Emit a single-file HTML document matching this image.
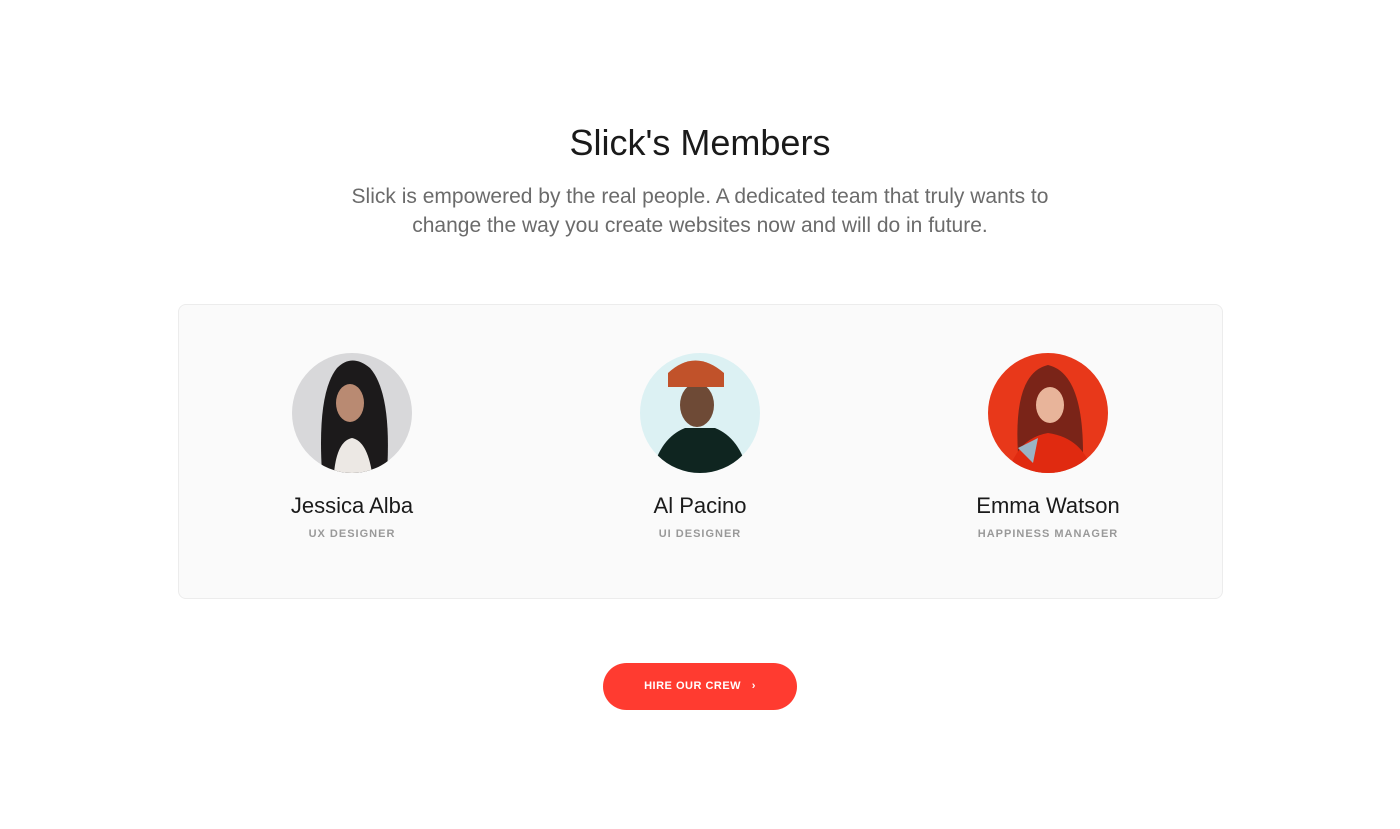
<!DOCTYPE html>
<html><head><style>
body{margin:0;width:1400px;height:829px;background:#fff;font-family:"Liberation Sans",sans-serif;position:relative;overflow:hidden}
h1{position:absolute;top:119px;left:0;width:1400px;text-align:center;margin:0;font-weight:400;font-size:36px;color:#1a1a1a;line-height:48px}
p.lead{position:absolute;top:182px;left:200px;width:1000px;text-align:center;margin:0;font-size:21px;line-height:29px;color:#6b6b6b}
.card{position:absolute;left:178px;top:304px;width:1043px;height:293px;background:#fafafa;border:1px solid #ececec;border-radius:8px}
.m{position:absolute;top:353px;width:300px;text-align:center}
.m svg{display:block;margin:0 auto}
.n{font-size:22px;color:#1a1a1a;margin-top:17px;line-height:32px}
.r{font-size:11px;font-weight:700;letter-spacing:1px;color:#999;margin-top:6px}
.btn{position:absolute;left:603px;top:663px;width:194px;height:47px;border-radius:24px;background:#ff3b30;color:#fff;font-size:11px;font-weight:700;letter-spacing:.5px;text-align:center;line-height:47px}
</style></head><body>
<h1>Slick's Members</h1>
<p class="lead">Slick is empowered by the real people. A dedicated team that truly wants to<br>change the way you create websites now and will do in future.</p>
<div class="card"></div>
<div class="m" style="left:202px"><svg width="120" height="120"><defs><clipPath id="a"><circle cx="60" cy="60" r="60"/></clipPath></defs><g clip-path="url(#a)"><rect width="120" height="120" fill="#d8d8da"/><path d="M30 120 Q25 40 45 15 Q60 0 78 15 Q100 40 95 120Z" fill="#1c1a1b"/><ellipse cx="58" cy="50" rx="14" ry="19" fill="#b98a72"/><path d="M42 120 Q45 88 60 85 Q75 88 80 120Z" fill="#ece8e4"/></g></svg><div class="n">Jessica Alba</div><div class="r">UX DESIGNER</div></div>
<div class="m" style="left:550px"><svg width="120" height="120"><defs><clipPath id="b"><circle cx="60" cy="60" r="60"/></clipPath></defs><g clip-path="url(#b)"><rect width="120" height="120" fill="#dcf1f3"/><ellipse cx="57" cy="52" rx="17" ry="22" fill="#6e4a36"/><path d="M28 20 Q55 -5 84 20 L84 34 L28 34Z" fill="#c1522a"/><path d="M12 120 Q20 85 45 75 L75 75 Q100 85 108 120Z" fill="#0f2520"/></g></svg><div class="n">Al Pacino</div><div class="r">UI DESIGNER</div></div>
<div class="m" style="left:898px"><svg width="120" height="120"><defs><clipPath id="c"><circle cx="60" cy="60" r="60"/></clipPath></defs><g clip-path="url(#c)"><rect width="120" height="120" fill="#e8381a"/><path d="M30 100 Q25 20 60 12 Q95 20 95 100Z" fill="#7a2418"/><ellipse cx="62" cy="52" rx="14" ry="18" fill="#e8b49a"/><path d="M20 120 Q30 85 60 80 Q95 85 105 120Z" fill="#e02a10"/><path d="M30 95 L50 85 L45 110 Z" fill="#9ab4c4"/></g></svg><div class="n">Emma Watson</div><div class="r">HAPPINESS MANAGER</div></div>
<div class="btn">HIRE OUR CREW &nbsp;&nbsp;›</div>
</body></html>
